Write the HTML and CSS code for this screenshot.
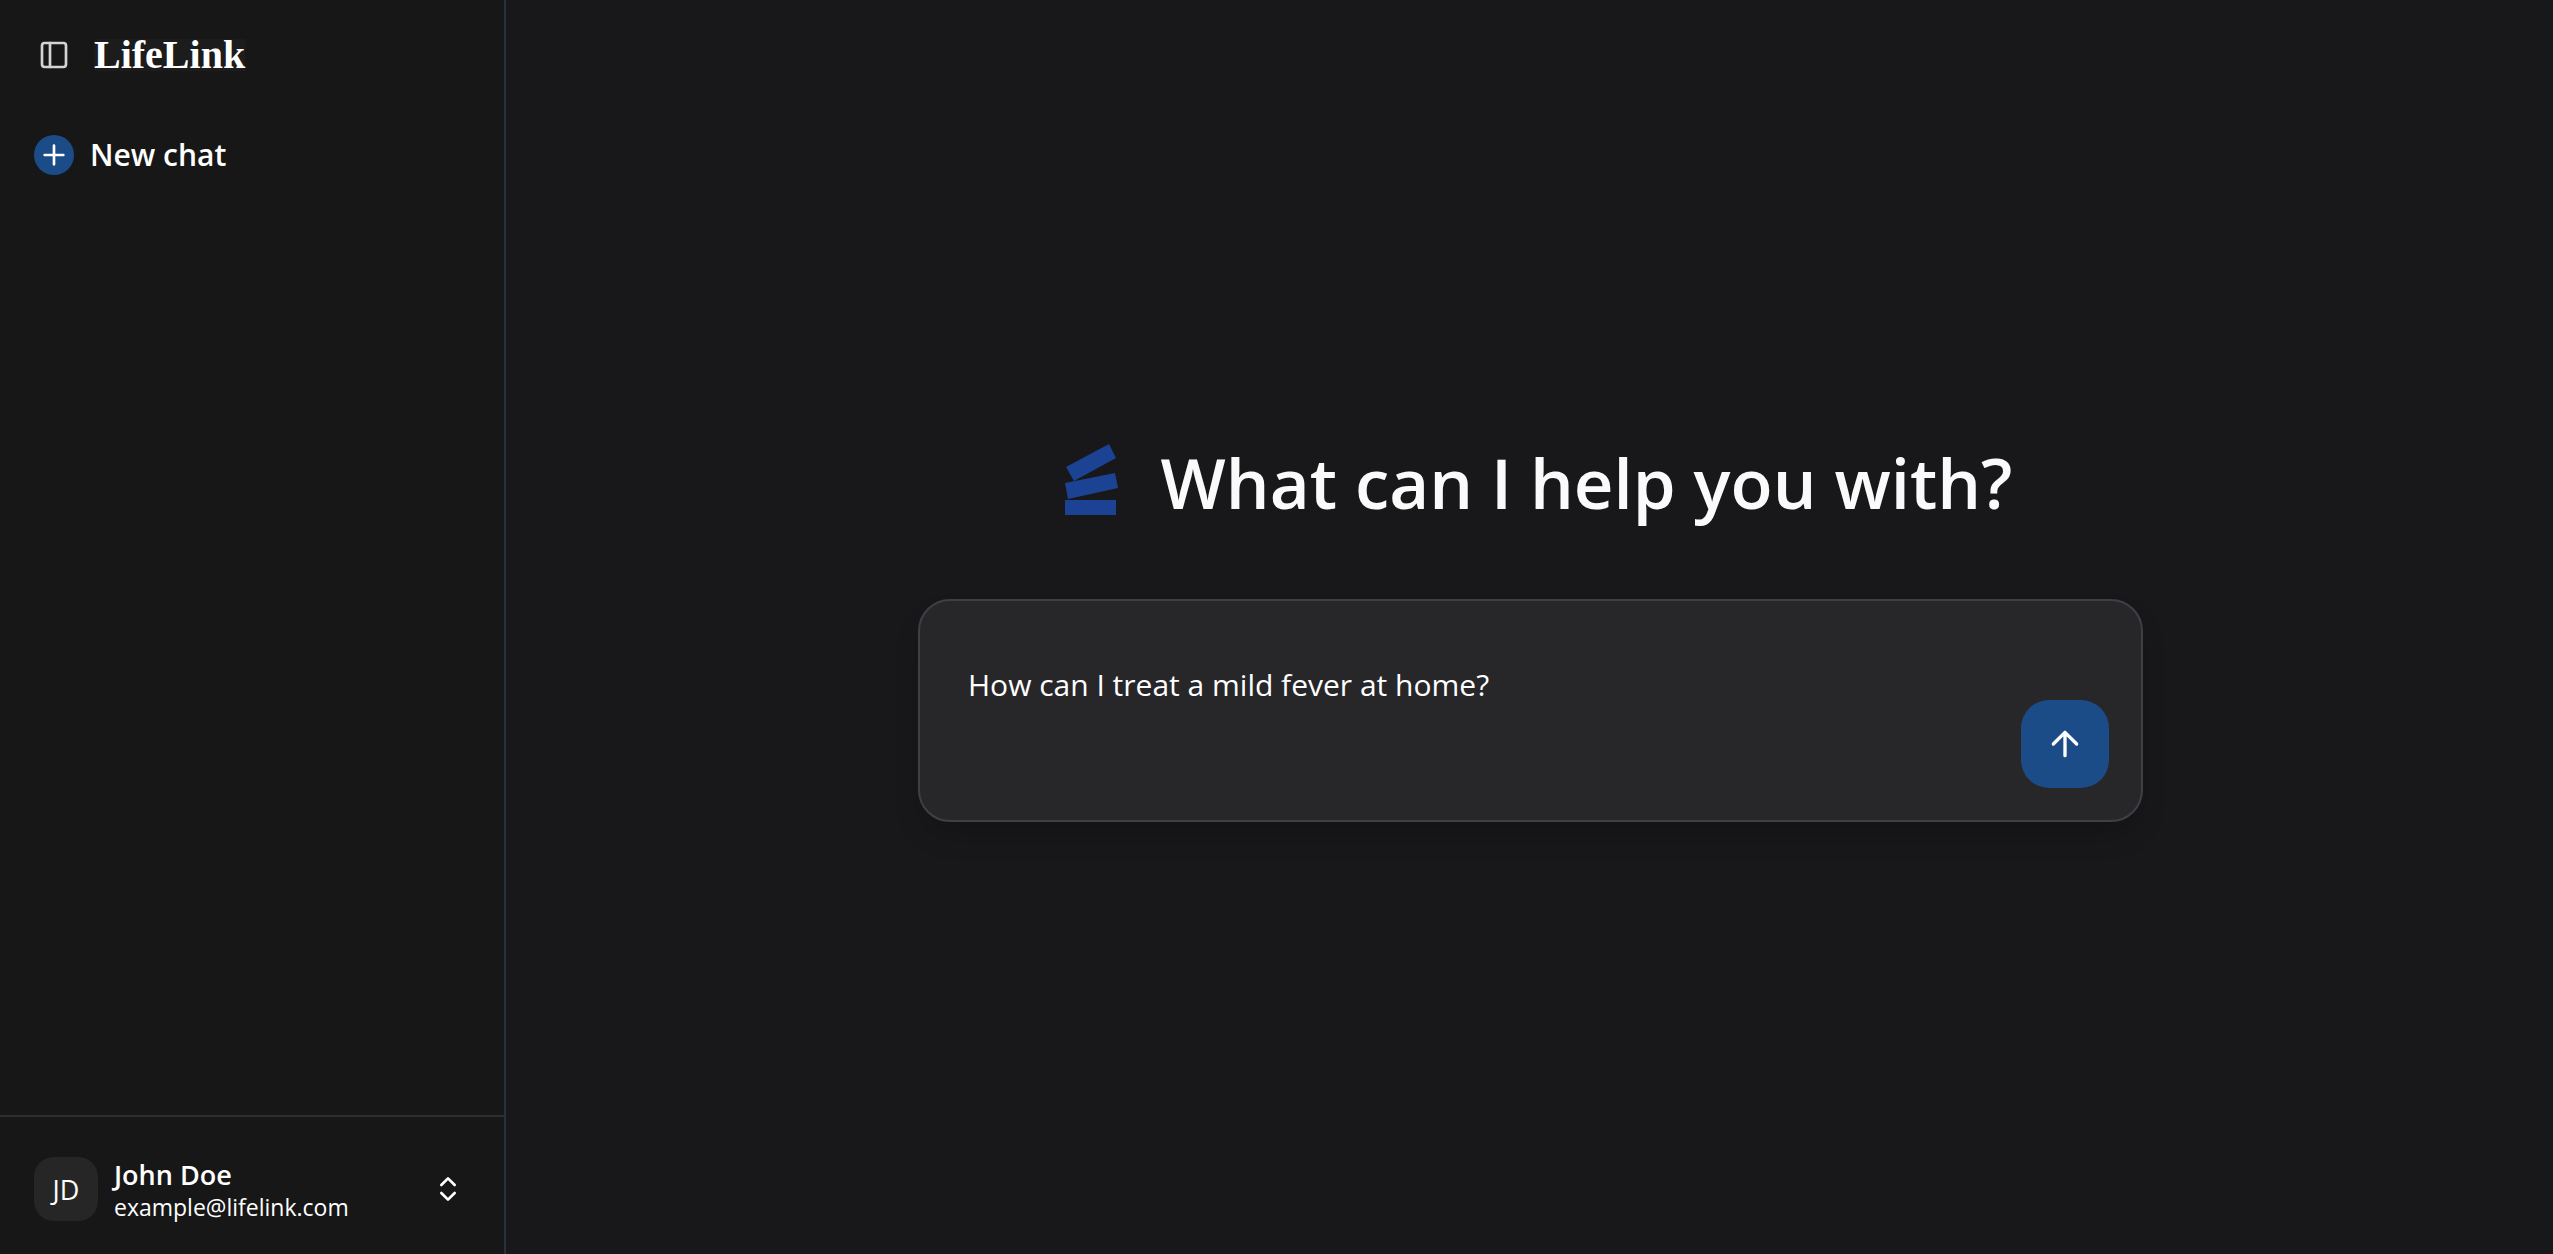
FILE: index.html
```html
<!DOCTYPE html>
<html lang="en">
<head>
<meta charset="utf-8">
<meta name="viewport" content="width=device-width, initial-scale=1">
<title>LifeLink</title>
<link rel="stylesheet" href="styles.css">
</head>
<body>
<div class="app">
  <aside class="sidebar">
    <header class="sidebar-header">
      <button class="icon-button" type="button" aria-label="Toggle sidebar">
        <svg class="icon icon-muted" viewBox="0 0 24 24" aria-hidden="true"><rect x="3" y="3" width="18" height="18" rx="2"/><path d="M9 3v18"/></svg>
      </button>
      <a class="brand" href="#">LifeLink</a>
    </header>
    <button class="new-chat" type="button">
      <span class="new-chat-badge"><svg class="icon" viewBox="0 0 24 24" aria-hidden="true"><path d="M5 12h14M12 5v14"/></svg></span>
      <span>New chat</span>
    </button>
    <footer class="sidebar-footer">
      <button class="account" type="button">
        <span class="avatar">JD</span>
        <span class="account-text">
          <span class="account-name">John Doe</span>
          <span class="account-email">example@lifelink.com</span>
        </span>
        <svg class="icon" viewBox="0 0 24 24" aria-hidden="true"><path d="m7 15 5 5 5-5M7 9l5-5 5 5"/></svg>
      </button>
    </footer>
  </aside>
  <main class="main">
    <div class="hero">
      <svg class="mark" viewBox="0 0 80 80" aria-hidden="true"><path d="M17 28 60 5l7 14-42 23zM16 44l50-10 3 15-50 11zM16 61h51v15H16z"/></svg>
      <h1 class="title">What can I help you with?</h1>
    </div>
    <form class="composer">
      <textarea class="prompt" aria-label="Message">How can I treat a mild fever at home?</textarea>
      <button class="send" type="button" aria-label="Send">
        <svg class="icon icon-large" viewBox="0 0 24 24" aria-hidden="true"><path d="m5 12 7-7 7 7M12 19V5"/></svg>
      </button>
    </form>
  </main>
</div>
</body>
</html>
```
FILE: styles.css
```css
* {
  box-sizing: border-box;
}

body {
  margin: 0;
  background: #18181b;
  color: #fafafa;
  font-family: "Open Sans", "Noto Sans", sans-serif;
}

button,
textarea {
  margin: 0;
  padding: 0;
  border: 0;
  background: none;
  color: #fff;
  font-family: inherit;
}

button {
  cursor: pointer;
}

.app {
  display: flex;
  min-height: 100vh;
}

.icon {
  display: block;
  flex: none;
  width: 32px;
  height: 32px;
  fill: none;
  stroke: #fff;
  stroke-width: 2;
  stroke-linecap: round;
  stroke-linejoin: round;
}

.icon-muted {
  stroke: #d4d4d4;
}

.icon-large {
  width: 40px;
  height: 40px;
}

.sidebar {
  display: flex;
  flex: none;
  flex-direction: column;
  width: 506px;
  border-right: 2px solid #253040;
  background: #171717;
}

.sidebar-header {
  display: flex;
  align-items: center;
  gap: 24px;
  padding: 39px 38px 0;
}

.brand {
  background: #1c1c1c;
  color: #fff;
  font-family: "Liberation Serif", serif;
  font-size: 40px;
  font-weight: 700;
  line-height: 32px;
  text-decoration: none;
}

.new-chat {
  display: flex;
  align-items: center;
  gap: 16px;
  margin-top: 63px;
  padding: 0 34px;
  font-size: 30px;
  font-weight: 600;
  line-height: 42px;
}

.new-chat-badge {
  display: grid;
  place-items: center;
  width: 40px;
  height: 40px;
  border-radius: 50%;
  background: #1c4c87;
}

.sidebar-footer {
  margin-top: auto;
  padding: 38px 34px 31px;
  border-top: 2px solid #2e2e2e;
}

.account {
  display: flex;
  align-items: center;
  gap: 16px;
  width: 100%;
  padding-right: 6px;
  text-align: left;
}

.avatar {
  display: grid;
  flex: none;
  place-items: center;
  width: 64px;
  height: 64px;
  border-radius: 20px;
  background: #262626;
  font-size: 27px;
}

.account-text {
  display: flex;
  flex: 1;
  flex-direction: column;
  padding-top: 4px;
}

.account-name {
  font-size: 27px;
  font-weight: 600;
  line-height: 32px;
}

.account-email {
  font-size: 23px;
  line-height: 32px;
}

.main {
  display: flex;
  flex: 1;
  flex-direction: column;
  align-items: center;
  justify-content: center;
  gap: 72px;
  padding: 0 0 2px 2px;
}

.hero {
  display: flex;
  align-items: center;
  gap: 32px;
}

.mark {
  width: 80px;
  height: 80px;
  fill: #1c4294;
}

.title {
  margin: 0;
  padding-top: 6px;
  font-size: 69px;
  font-weight: 600;
  line-height: 90px;
}

.composer {
  display: flex;
  align-items: flex-end;
  width: 60%;
  max-width: 1225px;
  padding: 32px;
  border: 2px solid #3f3f46;
  border-radius: 32px;
  background: #27272a;
  box-shadow: 0 16px 30px -6px rgba(0, 0, 0, 0.2);
}

.prompt {
  flex: 1;
  height: 155px;
  padding: 28px 16px;
  outline: 0;
  font-size: 30px;
  line-height: 48px;
  resize: none;
}

.send {
  display: grid;
  flex: none;
  place-items: center;
  width: 88px;
  height: 88px;
  border-radius: 28px;
  background: #1c4c87;
}
```
